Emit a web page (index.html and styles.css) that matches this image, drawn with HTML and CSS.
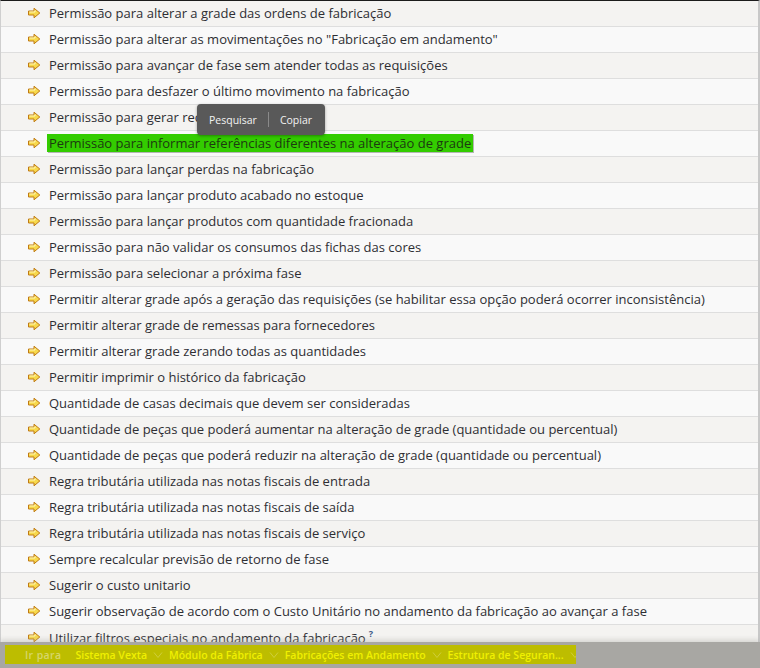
FILE: index.html
```html
<!DOCTYPE html>
<html lang="pt-BR">
<head>
<meta charset="utf-8">
<title>Permissões</title>
<link rel="stylesheet" href="styles.css">
</head>
<body>
<svg width="0" height="0" class="defs">
  <defs>
    <symbol id="arr" viewBox="0 0 14 12">
      <path d="M1.5 4 H7 V1.2 L12.8 6 L7 10.8 V8 H1.5 Z" fill="#f7d94c" stroke="#c07a12" stroke-width="1" stroke-linejoin="round"/>
      <path d="M2.5 5 H8 V3.3" fill="none" stroke="#fff6b8" stroke-width="1"/>
    </symbol>
    <symbol id="chev" viewBox="0 0 10 8">
      <path d="M1 1.5 L5 6.5 L9 1.5" fill="none" stroke="#cfcf3c" stroke-width="1"/>
    </symbol>
  </defs>
</svg>
<div class="panel">
  <ul class="list">
    <li class="row"><svg class="ico"><use href="#arr"/></svg><span>Permissão para alterar a grade das ordens de fabricação</span></li>
    <li class="row"><svg class="ico"><use href="#arr"/></svg><span>Permissão para alterar as movimentações no "Fabricação em andamento"</span></li>
    <li class="row"><svg class="ico"><use href="#arr"/></svg><span>Permissão para avançar de fase sem atender todas as requisições</span></li>
    <li class="row"><svg class="ico"><use href="#arr"/></svg><span>Permissão para desfazer o último movimento na fabricação</span></li>
    <li class="row"><svg class="ico"><use href="#arr"/></svg><span class="clip">Permissão para gerar rec</span>
      <div class="popup"><span>Pesquisar</span><i class="sep"></i><span>Copiar</span></div>
    </li>
    <li class="row"><svg class="ico"><use href="#arr"/></svg><span class="hl">Permissão para informar referências diferentes na alteração de grade</span></li>
    <li class="row"><svg class="ico"><use href="#arr"/></svg><span>Permissão para lançar perdas na fabricação</span></li>
    <li class="row"><svg class="ico"><use href="#arr"/></svg><span>Permissão para lançar produto acabado no estoque</span></li>
    <li class="row"><svg class="ico"><use href="#arr"/></svg><span>Permissão para lançar produtos com quantidade fracionada</span></li>
    <li class="row"><svg class="ico"><use href="#arr"/></svg><span>Permissão para não validar os consumos das fichas das cores</span></li>
    <li class="row"><svg class="ico"><use href="#arr"/></svg><span>Permissão para selecionar a próxima fase</span></li>
    <li class="row"><svg class="ico"><use href="#arr"/></svg><span>Permitir alterar grade após a geração das requisições (se habilitar essa opção poderá ocorrer inconsistência)</span></li>
    <li class="row"><svg class="ico"><use href="#arr"/></svg><span>Permitir alterar grade de remessas para fornecedores</span></li>
    <li class="row"><svg class="ico"><use href="#arr"/></svg><span>Permitir alterar grade zerando todas as quantidades</span></li>
    <li class="row"><svg class="ico"><use href="#arr"/></svg><span>Permitir imprimir o histórico da fabricação</span></li>
    <li class="row"><svg class="ico"><use href="#arr"/></svg><span>Quantidade de casas decimais que devem ser consideradas</span></li>
    <li class="row"><svg class="ico"><use href="#arr"/></svg><span>Quantidade de peças que poderá aumentar na alteração de grade (quantidade ou percentual)</span></li>
    <li class="row"><svg class="ico"><use href="#arr"/></svg><span>Quantidade de peças que poderá reduzir na alteração de grade (quantidade ou percentual)</span></li>
    <li class="row"><svg class="ico"><use href="#arr"/></svg><span>Regra tributária utilizada nas notas fiscais de entrada</span></li>
    <li class="row"><svg class="ico"><use href="#arr"/></svg><span>Regra tributária utilizada nas notas fiscais de saída</span></li>
    <li class="row"><svg class="ico"><use href="#arr"/></svg><span>Regra tributária utilizada nas notas fiscais de serviço</span></li>
    <li class="row"><svg class="ico"><use href="#arr"/></svg><span>Sempre recalcular previsão de retorno de fase</span></li>
    <li class="row"><svg class="ico"><use href="#arr"/></svg><span>Sugerir o custo unitario</span></li>
    <li class="row"><svg class="ico"><use href="#arr"/></svg><span>Sugerir observação de acordo com o Custo Unitário no andamento da fabricação ao avançar a fase</span></li>
    <li class="row"><svg class="ico"><use href="#arr"/></svg><span>Utilizar filtros especiais no andamento da fabricação<sup class="help">?</sup></span></li>
  </ul>
</div>
<footer class="footer">
  <nav class="crumbs">
    <span class="lead">Ir para</span>
    <span class="item">Sistema Vexta</span><svg class="chev"><use href="#chev"/></svg>
    <span class="item">Módulo da Fábrica</span><svg class="chev"><use href="#chev"/></svg>
    <span class="item">Fabricações em Andamento</span><svg class="chev"><use href="#chev"/></svg>
    <span class="item">Estrutura de Seguran...</span><svg class="chev"><use href="#chev"/></svg>
  </nav>
</footer>
</body>
</html>
```
FILE: styles.css
```css
html, body {
  margin: 0;
  padding: 0;
  height: 100%;
  overflow: hidden;
  background: #f9f9f9;
}
body {
  font-family: "Open Sans", "Noto Sans", sans-serif;
  font-size: 13px;
  color: #2e2e33;
}
.defs { position: absolute; }
.panel {
  border-top: 1px solid #1b1b1b;
  border-left: 1px solid #cfcfcf;
  border-right: 2px solid #c8c8c8;
}
.list {
  list-style: none;
  margin: 0;
  padding: 0;
}
.row {
  position: relative;
  box-sizing: border-box;
  height: 26px;
  padding-bottom: 2px;
  border-bottom: 1px solid #dedede;
  display: flex;
  align-items: center;
  padding-left: 26px;
  background: #f9f9f9;
  white-space: nowrap;
}
.row:nth-child(odd) { background: #f4f3f1; }
.ico {
  width: 14px;
  height: 12px;
  margin-right: 8px;
  margin-top: 1px;
  flex: none;
}
.hl {
  background: #33cc00;
  color: #1c3a10;
  margin-left: -2px;
  padding: 0 2px;
  box-shadow: 1px 1px 0 #b5b5b5;
  line-height: 18px;
}
.help {
  font-size: 9px;
  font-weight: 700;
  color: #3b5a86;
  margin-left: 3px;
  vertical-align: 6px;
}
.popup {
  position: absolute;
  left: 196px;
  top: -1px;
  height: 31px;
  width: 128px;
  box-sizing: border-box;
  background: #595959;
  border-radius: 4px;
  box-shadow: 0 1px 3px rgba(0,0,0,0.35);
  color: #f2f2f2;
  font-size: 10.5px;
  display: flex;
  align-items: center;
  padding-left: 12px;
  z-index: 2;
}
.popup .sep {
  width: 1px;
  height: 15px;
  background: #8a8a8a;
  margin: 0 11px 0 11px;
}
.footer {
  position: fixed;
  left: 0;
  right: 0;
  bottom: 0;
  height: 26px;
  background: #a8a7a3;
  box-shadow: 0 -2px 5px rgba(170,170,166,0.45);
  padding-top: 3px;
  box-sizing: border-box;
}
.crumbs {
  margin-left: 5px;
  width: 571px;
  height: 19px;
  background: #bdbd00;
  display: flex;
  align-items: center;
  font-size: 10.5px;
  font-weight: 600;
  padding-left: 20px;
  box-sizing: border-box;
  white-space: nowrap;
  overflow: hidden;
}
.lead { color: #d6d66a; margin-right: 14px; letter-spacing: 0.4px; }
.item { color: #f0f000; }
.chev { width: 10px; height: 8px; margin: 0 6px 0 6px; flex: none; }
```
